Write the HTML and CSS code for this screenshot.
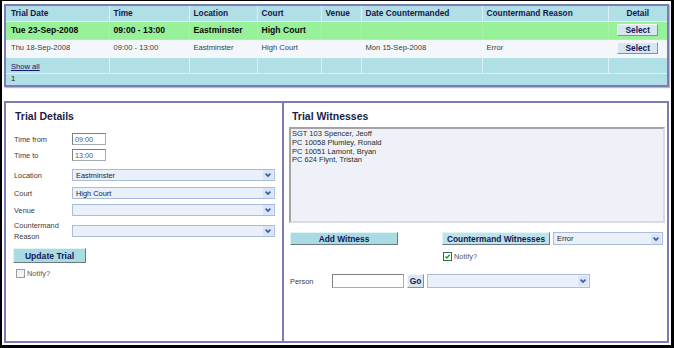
FILE: index.html
```html
<!DOCTYPE html>
<html lang="en">
<head>
    <meta charset="UTF-8">
    <title>Trial Details</title>
    <link rel="stylesheet" href="styles.css">
</head>
<body>
<div class="frame">
    <div class="grid-wrap">
        <table class="grid">
            <colgroup>
                <col style="width:103px"><col style="width:80px"><col style="width:68px"><col style="width:64px">
                <col style="width:40px"><col style="width:121px"><col style="width:126px"><col style="width:59px">
            </colgroup>
            <thead>
                <tr class="head">
                    <th>Trial Date</th>
                    <th>Time</th>
                    <th>Location</th>
                    <th>Court</th>
                    <th>Venue</th>
                    <th>Date Countermanded</th>
                    <th>Countermand Reason</th>
                    <th class="detail">Detail</th>
                </tr>
            </thead>
            <tbody>
                <tr class="row-current">
                    <td>Tue 23-Sep-2008</td>
                    <td>09:00 - 13:00</td>
                    <td>Eastminster</td>
                    <td>High Court</td>
                    <td></td>
                    <td></td>
                    <td></td>
                    <td class="detail"><button class="btn-select">Select</button></td>
                </tr>
                <tr class="row-normal">
                    <td>Thu 18-Sep-2008</td>
                    <td>09:00 - 13:00</td>
                    <td>Eastminster</td>
                    <td>High Court</td>
                    <td></td>
                    <td>Mon 15-Sep-2008</td>
                    <td>Error</td>
                    <td class="detail"><button class="btn-select">Select</button></td>
                </tr>
                <tr class="row-footer">
                    <td><a href="#">Show all</a></td>
                    <td></td><td></td><td></td><td></td><td></td><td></td><td></td>
                </tr>
                <tr class="row-pager">
                    <td colspan="8">1</td>
                </tr>
            </tbody>
        </table>
    </div>

    <div class="panels">
        <section class="panel panel-details">
            <h2>Trial Details</h2>

            <div class="field f-from">
                <label>Time from</label>
                <input class="time" type="text" value="09:00">
            </div>
            <div class="field f-to">
                <label>Time to</label>
                <input class="time" type="text" value="13:00">
            </div>
            <div class="field f-location">
                <label>Location</label>
                <div class="combo combo-wide"><span class="combo-text">Eastminster</span><span class="combo-btn"><svg viewBox="0 0 8 8"><path d="M1.6 2.6 L4 5 L6.4 2.6"/></svg></span></div>
            </div>
            <div class="field f-court">
                <label>Court</label>
                <div class="combo combo-wide"><span class="combo-text">High Court</span><span class="combo-btn"><svg viewBox="0 0 8 8"><path d="M1.6 2.6 L4 5 L6.4 2.6"/></svg></span></div>
            </div>
            <div class="field f-venue">
                <label>Venue</label>
                <div class="combo combo-wide"><span class="combo-text"></span><span class="combo-btn"><svg viewBox="0 0 8 8"><path d="M1.6 2.6 L4 5 L6.4 2.6"/></svg></span></div>
            </div>
            <div class="field f-reason">
                <label>Countermand<br>Reason</label>
                <div class="combo combo-wide"><span class="combo-text"></span><span class="combo-btn"><svg viewBox="0 0 8 8"><path d="M1.6 2.6 L4 5 L6.4 2.6"/></svg></span></div>
            </div>

            <button class="btn btn-update">Update Trial</button>

            <div class="notify notify-details">
                <span class="check"></span>
                <span>Notify?</span>
            </div>
        </section>

        <section class="panel panel-witnesses">
            <h2>Trial Witnesses</h2>

            <div class="listbox">
                <div>SGT 103 Spencer, Jeoff</div>
                <div>PC 10058 Plumley, Ronald</div>
                <div>PC 10051 Lamont, Bryan</div>
                <div>PC 624 Flynt, Tristan</div>
            </div>

            <div class="witness-actions">
                <button class="btn btn-add">Add Witness</button>
                <button class="btn btn-countermand">Countermand Witnesses</button>
                <div class="combo combo-reason"><span class="combo-text">Error</span><span class="combo-btn"><svg viewBox="0 0 8 8"><path d="M1.6 2.6 L4 5 L6.4 2.6"/></svg></span></div>
            </div>

            <div class="notify notify-witnesses">
                <span class="check checked"><svg viewBox="0 0 9 9"><path d="M1.8 4.4 L3.7 6.4 L7.3 2.2"/></svg></span>
                <span>Notify?</span>
            </div>

            <div class="person-row">
                <label>Person</label>
                <input class="person" type="text">
                <button class="btn-go">Go</button>
                <div class="combo combo-person"><span class="combo-text"></span><span class="combo-btn"><svg viewBox="0 0 8 8"><path d="M1.6 2.6 L4 5 L6.4 2.6"/></svg></span></div>
            </div>
        </section>
    </div>
</div>
</body>
</html>
```

FILE: styles.css
```css
* {
    box-sizing: border-box;
}

body {
    margin: 0;
    font-family: "Liberation Sans", Arial, sans-serif;
    background-color: #FFFFFF;
    color: #333333;
}

.frame {
    width: 674px;
    height: 348px;
    border-style: solid;
    border-color: #000000;
    border-width: 1px 3px 3px 2px;
    padding: 3px 2px 0 2px;
    background-color: #FFFFFF;
}

/* top grid */
.grid-wrap {
    border: 2px solid #7C7CB4;
    box-shadow: 1px 1px 1px #B8B8C8;
    height: 83px;
    overflow: hidden;
}

.grid {
    width: 661px;
    table-layout: fixed;
    border-collapse: collapse;
    border-style: hidden;
}

.grid th, .grid td {
    border: 1px solid #DDF0F3;
    padding: 0 4px;
    text-align: left;
    white-space: nowrap;
    overflow: hidden;
    line-height: 10px;
}

.grid th:first-child, .grid td:first-child {
    padding-left: 5px;
}

.grid .detail {
    text-align: center;
    padding: 0;
}

.head {
    height: 15px;
    background-color: #B0DFE5;
}

.head th {
    font-size: 8.3px;
    font-weight: bold;
    color: #141450;
}

.row-current {
    height: 18px;
    background-color: #98F098;
}

.row-current td {
    font-size: 8.6px;
    font-weight: bold;
    color: #0A0A0A;
    border-color: #A8F2A8;
}

.row-normal {
    height: 18px;
    background-color: #F3F7FB;
}

.row-normal td {
    font-size: 7.6px;
    color: #3A3A3A;
    border-color: #F3F7FB;
}

.row-footer {
    height: 16px;
    background-color: #B0DFE5;
}

.row-footer a {
    font-size: 7.6px;
    color: #16166A;
}

.row-pager {
    height: 12px;
    background-color: #B0DFE5;
}

.row-pager td {
    font-size: 7.6px;
    color: #101040;
    border-top: 1px solid #DDF0F3;
}

.btn-select {
    width: 41px;
    height: 12px;
    padding: 0;
    font-family: inherit;
    font-size: 8.3px;
    font-weight: bold;
    color: #14145A;
    background-color: #D8E6F0;
    border: 1px solid;
    border-color: #F4F8FB #8C8C9C #8C8C9C #F4F8FB;
    display: block;
    margin: 0 auto;
}

/* lower panels */
.panels {
    display: flex;
    margin-top: 14px;
    height: 242px;
}

.panel {
    border: 2px solid #7C7CB4;
    height: 100%;
}

.panel-details {
    width: 280px;
    padding: 0 0 0 8px;
}

.panel-witnesses {
    width: 385px;
    border-left: none;
    padding: 0 0 0 5px;
}

.panel h2 {
    margin: 0;
    font-size: 10.5px;
    font-weight: bold;
    color: #1C1C48;
    line-height: 14px;
    padding-top: 6px;
}

.panel-details h2 {
    padding-left: 1px;
    height: 30px;
}

.panel-witnesses h2 {
    padding-left: 3px;
    height: 22px;
}

label {
    font-size: 7.4px;
    color: #3A3A3A;
}

.field {
    display: flex;
    align-items: center;
    height: 12px;
}

.field label {
    width: 58px;
    flex: none;
}

.f-from { margin-top: 0; }
.f-to { margin-top: 4px; }
.f-location { margin-top: 8px; }
.f-court { margin-top: 6px; }
.f-venue { margin-top: 5px; }

.f-reason {
    margin-top: 4px;
    height: 22px;
}

.f-reason label {
    line-height: 11px;
}

.time {
    width: 34px;
    height: 12px;
    padding: 0 2px;
    font-family: inherit;
    font-size: 7.2px;
    color: #555555;
    border: 1px solid #A5ACB2;
    border-left-color: #7F7F7F;
    border-top-color: #7F7F7F;
    background-color: #FFFFFF;
}

.combo {
    display: flex;
    align-items: center;
    height: 12px;
    background-color: #EAF0FA;
    border: 1px solid #A9BDD8;
}

.combo-wide {
    width: 203px;
}

.combo-text {
    flex: 1;
    font-size: 7.4px;
    color: #222222;
    padding-left: 3px;
}

.combo-btn {
    width: 10px;
    height: 10px;
    margin-right: 1px;
    background-color: #D8E4F8;
    display: flex;
    align-items: center;
    justify-content: center;
}

.combo-btn svg {
    width: 8px;
    height: 8px;
    fill: none;
    stroke: #3C5A96;
    stroke-width: 1.6;
}

.btn {
    font-family: inherit;
    font-weight: bold;
    color: #14145A;
    background-color: #A9DCE2;
    border: 1px solid;
    border-color: #E4F4F6 #707880 #707880 #E4F4F6;
    padding: 0;
}

.btn-update {
    display: block;
    width: 73px;
    height: 15px;
    margin: 6px 0 0 -1px;
    font-size: 8.6px;
}

.notify {
    display: flex;
    align-items: center;
    gap: 2px;
    font-size: 7.4px;
    color: #555555;
}

.notify-details {
    margin: 6px 0 0 2px;
}

.check {
    width: 9px;
    height: 9px;
    border: 1px solid #9A9AA8;
    background-color: #F4F4F4;
    display: inline-block;
}

.check.checked {
    border-color: #2E6B52;
    background-color: #FFFFFF;
}

.check svg {
    display: block;
    width: 7px;
    height: 7px;
    fill: none;
    stroke: #229A22;
    stroke-width: 1.8;
}

.listbox {
    width: 376px;
    height: 96px;
    margin-top: 2px;
    background-color: #EEF2F8;
    border: 2px solid;
    border-color: #A4A4A4 #DCDCDC #DCDCDC #A4A4A4;
    padding: 1px 1px;
    font-size: 7.5px;
    line-height: 8.8px;
    color: #2A2A2A;
}

.witness-actions {
    display: flex;
    align-items: center;
    margin-top: 9px;
    height: 13px;
}

.btn-add {
    width: 108px;
    height: 13px;
    margin-left: 1px;
    font-size: 8.4px;
}

.btn-countermand {
    width: 108px;
    height: 13px;
    margin-left: 44px;
    font-size: 8.4px;
    background-color: #BCE4E9;
}

.combo-reason {
    width: 110px;
    height: 13px;
    margin-left: 3px;
}

.notify-witnesses {
    margin: 7px 0 0 154px;
    height: 9px;
}

.person-row {
    display: flex;
    align-items: center;
    margin-top: 13px;
    height: 14px;
}

.person-row label {
    width: 43px;
    padding-left: 1px;
}

.person {
    width: 72px;
    height: 14px;
    border: 1px solid #A5ACB2;
    border-left-color: #7F7F7F;
    border-top-color: #7F7F7F;
}

.btn-go {
    width: 17px;
    height: 14px;
    margin-left: 3px;
    padding: 0;
    font-family: inherit;
    font-size: 8.4px;
    font-weight: bold;
    color: #14145A;
    background-color: #D8E6F0;
    border: 1px solid;
    border-color: #F4F8FB #8C8C9C #8C8C9C #F4F8FB;
}

.combo-person {
    width: 163px;
    height: 14px;
    margin-left: 3px;
}
```
